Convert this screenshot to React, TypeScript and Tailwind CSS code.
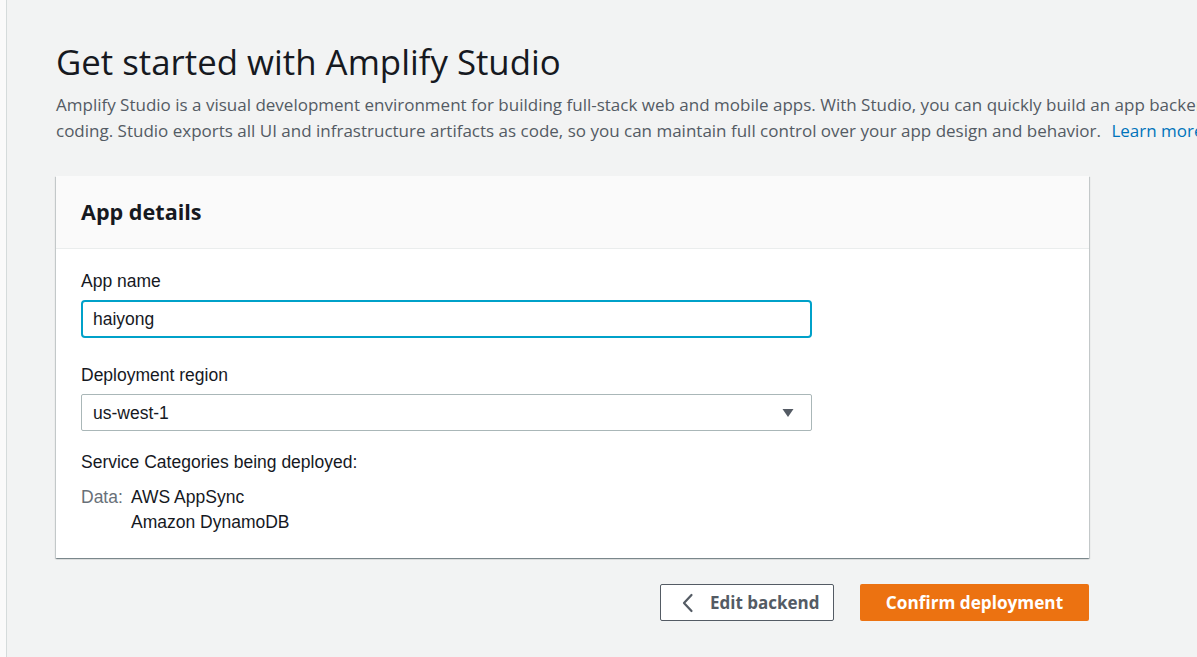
const ember = "font-['Open_Sans',_'Liberation_Sans',_sans-serif]";
const arial = "font-['Liberation_Sans',_Arial,_sans-serif]";

function Caret() {
  return (
    <svg width="12" height="10" viewBox="0 0 12 10" className="text-[#545b64]">
      <path d="M0.5 1 L11.5 1 L6 9 Z" fill="currentColor" />
    </svg>
  );
}

function ChevronLeft() {
  return (
    <svg width="14" height="20" viewBox="0 0 14 20" className="text-[#545b64]">
      <path d="M10.5 2 L3 10 L10.5 18" fill="none" stroke="currentColor" strokeWidth="2.2" strokeLinecap="round" strokeLinejoin="round" />
    </svg>
  );
}

export default function App() {
  return (
    <div className="flex h-[657px] w-[1197px] overflow-hidden bg-[#f2f3f3]">
      <div className="w-[7px] shrink-0 border-r border-[#d5dbdb] bg-[#fafafa]" />
      <main className="min-w-0 flex-1 pl-[49px] pt-[42px]">
        <h1 className={`${ember} text-[34.8px] leading-[40px] text-[#16191f]`}>
          Get started with Amplify Studio
        </h1>
        <div className={`${ember} mt-[10px] text-[17px] leading-[26px] text-[#545b64] whitespace-nowrap`}>
          <p>
            Amplify Studio is a visual development environment for building full-stack web and mobile apps. With Studio, you can quickly build an app backend
          </p>
          <p>
            coding. Studio exports all UI and infrastructure artifacts as code, so you can maintain full control over your app design and behavior.{"  "}
            <a className="ml-[6px] text-[#0073bb]" href="#">Learn more</a>
          </p>
        </div>

        <section className="mt-[32px] w-[1033px] bg-white shadow-[0_1px_1px_0_rgba(0,28,36,0.3),1px_1px_1px_0_rgba(0,28,36,0.15),-1px_1px_1px_0_rgba(0,28,36,0.15)]">
          <div className="flex h-[73px] items-center border-b border-[#eaeded] bg-[#fafafa] px-[25px]">
            <h2 className={`${ember} text-[21.6px] leading-[28px] font-bold text-[#16191f]`}>App details</h2>
          </div>
          <div className={`${arial} px-[25px] pt-[21px] pb-[23px] text-[17.5px] text-[#16191f]`}>
            <label className="block leading-[22px]">App name</label>
            <div className="mt-[8px] flex h-[38px] w-[731px] items-center rounded-[4px] border-2 border-[#00a1c9] px-[10px] leading-[22px]">
              haiyong
            </div>

            <label className="mt-[26px] block leading-[22px]">Deployment region</label>
            <div className="mt-[8px] flex h-[37px] w-[731px] items-center justify-between rounded-[2px] border border-[#aab7b8] pl-[11px] pr-[17px] leading-[22px]">
              <span>us-west-1</span>
              <Caret />
            </div>

            <p className="mt-[20px] leading-[22px]">Service Categories being deployed:</p>
            <div className="mt-[12px] flex leading-[25px]">
              <span className="w-[50px] text-[#687078]">Data:</span>
              <div>
                <p>AWS AppSync</p>
                <p>Amazon DynamoDB</p>
              </div>
            </div>
          </div>
        </section>

        <div className={`${ember} mt-[26px] flex w-[1033px] justify-end gap-[26px]`}>
          <button className="flex h-[37px] w-[174px] items-center gap-[15px] rounded-[2px] border border-[#545b64] bg-white pl-[20px] text-[17px] leading-[22px] font-bold text-[#545b64]">
            <ChevronLeft />
            Edit backend
          </button>
          <button className="h-[37px] w-[229px] rounded-[2px] bg-[#ec7211] text-[17.2px] leading-[22px] font-bold text-white">
            Confirm deployment
          </button>
        </div>
      </main>
    </div>
  );
}
